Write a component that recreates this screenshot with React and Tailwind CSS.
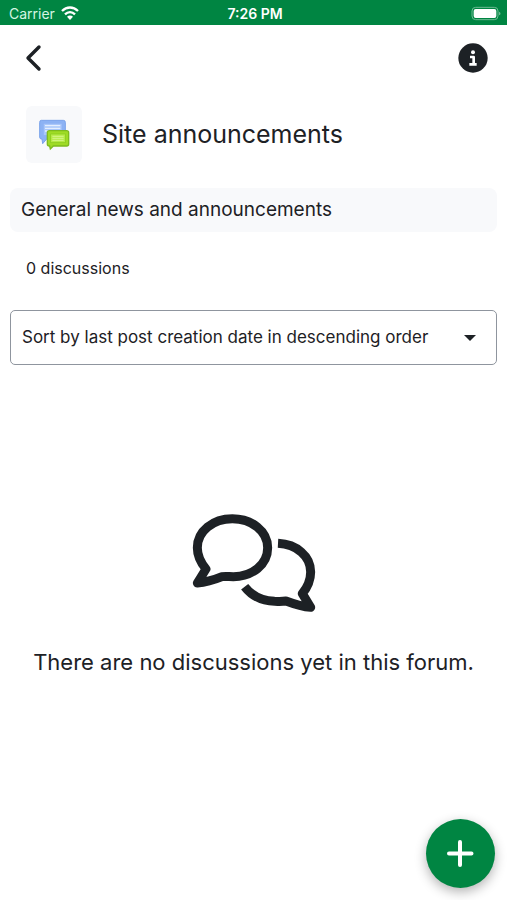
import { useState } from 'react';

const sortOptions = [
  'Sort by last post creation date in descending order',
  'Sort by last post creation date in ascending order',
  'Sort by creation date in descending order',
  'Sort by creation date in ascending order',
];

function StatusBar() {
  return (
    <div className="grid h-[25px] grid-cols-3 items-center bg-[#008542] pt-px pr-[6px] pl-[9px] text-[14px] text-white">
      <div className="flex items-center gap-1.5">
        <span className="text-[#d5f5e2]">Carrier</span>
        <svg viewBox="0 0 54 42" className="h-[14px] w-[18px]" fill="none" stroke="currentColor" strokeWidth="7" aria-hidden="true">
          <path d="M3 15 C17 1 37 1 51 15" />
          <path d="M12 25 C21 16 33 16 42 25" />
          <path d="M27 42 L18 32 C23 27 31 27 36 32 Z" fill="currentColor" stroke="none" />
        </svg>
      </div>
      <span className="text-center font-semibold">7:26 PM</span>
      <svg viewBox="0 0 90 45" className="h-[15px] w-[30px] justify-self-end" aria-hidden="true">
        <rect x="3" y="4" width="78" height="37" rx="11" fill="none" stroke="#6dbb93" strokeWidth="3" />
        <rect x="8" y="9" width="68" height="27" rx="6" fill="#fff" />
        <path d="M84 17 C90 19 90 26 84 28 Z" fill="#6dbb93" />
      </svg>
    </div>
  );
}

function ForumIcon() {
  return (
    <svg viewBox="0 0 96 96" className="h-8 w-8" aria-hidden="true">
      <path d="M10 4 H76 Q82 4 82 10 V54 Q82 60 76 60 H26 L14 74 L12 60 H10 Q5 60 5 54 V10 Q5 4 10 4 Z" fill="#8cb2f4" stroke="#7ba3ea" strokeWidth="3" />
      <rect x="16" y="13" width="56" height="36" fill="#a9c7fa" stroke="#8db1f2" strokeWidth="2" />
      <path d="M21 20 H67 M21 28 H67 M21 36 H67" stroke="#e4eeff" strokeWidth="4" />
      <path d="M34 35 H86 Q92 35 92 41 V75 Q92 81 86 81 H46 L37 90 L35 81 H34 Q28 81 28 75 V41 Q28 35 34 35 Z" fill="#9fdb25" stroke="#7dbb1e" strokeWidth="4" />
      <rect x="38" y="45" width="44" height="26" fill="#b5ea45" stroke="#86c91c" strokeWidth="2" />
      <path d="M43 52 H77 M43 58 H77 M43 64 H77" stroke="#d0f47d" strokeWidth="4" />
    </svg>
  );
}

function ChatBubbles() {
  return (
    <svg viewBox="36 38 372 300" className="h-[100px] w-[124px]" fill="none" stroke="#1d2125" strokeWidth="27" strokeLinejoin="round" aria-hidden="true">
      <path d="M52 248 L78 206 C60 184 52 166 52 142 C52 92 99 55 157 55 C215 55 263 92 263 142 C263 192 217 229 160 229 C147 229 138 227 126 229 C104 238 79 246 52 248 Z" />
      <path d="M294 129 C350 132 392 167 392 215 C392 240 383 260 367 280 L392 321 C365 319 342 311 318 302 C304 304 296 303 284 303 C245 302 215 286 194 259" />
    </svg>
  );
}

export default function App() {
  const [sort, setSort] = useState(sortOptions[0]);

  return (
    <div className="flex min-h-screen flex-col bg-white font-['Inter',sans-serif] text-[#1d2125]">
      <StatusBar />

      <header className="flex h-[66px] items-center justify-between px-[19px]">
        <button type="button" aria-label="Back" className="flex h-10 w-[30px] items-center justify-center">
          <svg viewBox="0 0 30 30" className="h-[30px] w-[30px]" fill="none" stroke="currentColor" strokeWidth="3.4" strokeLinecap="round" strokeLinejoin="round" aria-hidden="true">
            <path d="M20 4 L9 15 L20 26" />
          </svg>
        </button>
        <button type="button" aria-label="Information" className="h-[30px] w-[30px]">
          <svg viewBox="0 0 90 90" className="h-full w-full" aria-hidden="true">
            <circle cx="45" cy="45" r="44" fill="#1d2125" />
            <circle cx="45" cy="28" r="6" fill="#fff" />
            <path d="M36 42 H47 V64 M34 64 H56" fill="none" stroke="#fff" strokeWidth="8" strokeLinejoin="round" />
          </svg>
        </button>
      </header>

      <main className="flex grow flex-col px-[10px] pt-[15px]">
        <div className="flex items-center gap-5 px-4">
          <div className="flex h-[57px] w-[56px] items-center justify-center rounded-md bg-[#f8f9fb]">
            <ForumIcon />
          </div>
          <h1 className="text-[25px]">Site announcements</h1>
        </div>

        <p className="mt-[25px] rounded-lg bg-[#f8f9fb] px-[11px] py-2 text-[19px] leading-7">
          General news and announcements
        </p>
        <p className="mt-6 px-4 text-[16px] leading-6">0 discussions</p>

        <div className="relative mt-[30px]">
          <select
            aria-label="Sort discussions"
            value={sort}
            onChange={(e) => setSort(e.target.value)}
            className="h-[55px] w-full appearance-none rounded-[5px] border border-[#8f959e] bg-white pr-12 pl-[11px] text-[17px]"
          >
            {sortOptions.map((option) => (
              <option key={option}>{option}</option>
            ))}
          </select>
          <svg viewBox="0 0 12 6" className="pointer-events-none absolute top-[25px] right-[21px] h-[6px] w-3" fill="#1d2125" aria-hidden="true">
            <path d="M0 0 H12 L6 6 Z" />
          </svg>
        </div>

        <section className="mt-[148px] flex flex-col items-center gap-[33px]">
          <ChatBubbles />
          <p className="text-center text-[22px] leading-8">There are no discussions yet in this forum.</p>
        </section>
      </main>

      <button
        type="button"
        aria-label="Add discussion topic"
        className="fixed right-3 bottom-3 flex h-[69px] w-[69px] items-center justify-center rounded-full bg-[#008542] shadow-[0_4px_12px_rgba(0,0,0,0.3)]"
      >
        <svg viewBox="0 0 28 28" className="h-7 w-7" fill="none" stroke="#fff" strokeWidth="4" strokeLinecap="round" aria-hidden="true">
          <path d="M13 2 V25 M2 13.5 H24.5" />
        </svg>
      </button>
    </div>
  );
}
